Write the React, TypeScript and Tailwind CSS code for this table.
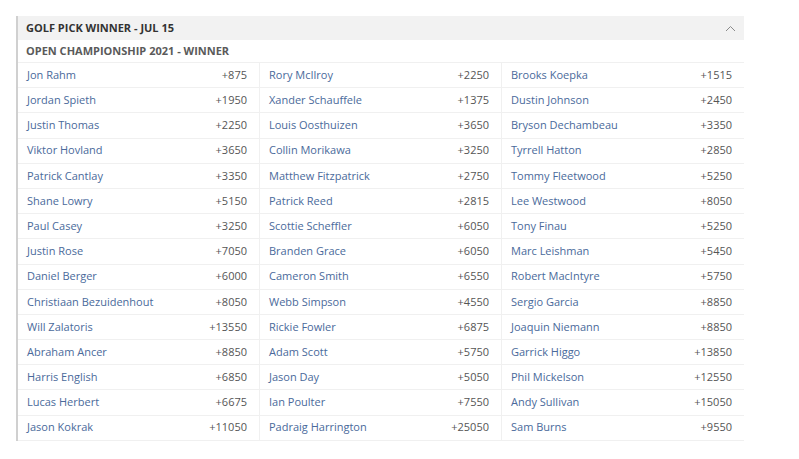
import React from "react";

const rows: [string, string, string, string, string, string][] = [
  ["Jon Rahm", "+875", "Rory McIlroy", "+2250", "Brooks Koepka", "+1515"],
  ["Jordan Spieth", "+1950", "Xander Schauffele", "+1375", "Dustin Johnson", "+2450"],
  ["Justin Thomas", "+2250", "Louis Oosthuizen", "+3650", "Bryson Dechambeau", "+3350"],
  ["Viktor Hovland", "+3650", "Collin Morikawa", "+3250", "Tyrrell Hatton", "+2850"],
  ["Patrick Cantlay", "+3350", "Matthew Fitzpatrick", "+2750", "Tommy Fleetwood", "+5250"],
  ["Shane Lowry", "+5150", "Patrick Reed", "+2815", "Lee Westwood", "+8050"],
  ["Paul Casey", "+3250", "Scottie Scheffler", "+6050", "Tony Finau", "+5250"],
  ["Justin Rose", "+7050", "Branden Grace", "+6050", "Marc Leishman", "+5450"],
  ["Daniel Berger", "+6000", "Cameron Smith", "+6550", "Robert MacIntyre", "+5750"],
  ["Christiaan Bezuidenhout", "+8050", "Webb Simpson", "+4550", "Sergio Garcia", "+8850"],
  ["Will Zalatoris", "+13550", "Rickie Fowler", "+6875", "Joaquin Niemann", "+8850"],
  ["Abraham Ancer", "+8850", "Adam Scott", "+5750", "Garrick Higgo", "+13850"],
  ["Harris English", "+6850", "Jason Day", "+5050", "Phil Mickelson", "+12550"],
  ["Lucas Herbert", "+6675", "Ian Poulter", "+7550", "Andy Sullivan", "+15050"],
  ["Jason Kokrak", "+11050", "Padraig Harrington", "+25050", "Sam Burns", "+9550"],
];

function Cell({ name, odds, last }: { name: string; odds: string; last?: boolean }) {
  return (
    <div
      className={`flex items-center justify-between h-[25.2px] pl-[9px] pr-[12px] border-b border-[#f0f0f0] ${
        last ? "" : "border-r"
      }`}
    >
      <span className="text-[#4a6a9b]">{name}</span>
      <span className="text-[#555555]">{odds}</span>
    </div>
  );
}

export default function App() {
  return (
    <div
      className="w-[799px] h-[459px] bg-white pt-[16px] pl-[16px]"
      style={{ fontFamily: '"Open Sans", "Noto Sans", sans-serif' }}
    >
      <div className="w-[728px] border-l-2 border-[#d0d0d0] text-[11px]">
        <div className="h-[24px] bg-[#f2f2f2] flex items-center justify-between pl-[8px] pr-[8px]">
          <span className="font-bold text-[#333333] text-[11px]">GOLF PICK WINNER - JUL 15</span>
          <svg width="11" height="7" viewBox="0 0 11 7">
            <path d="M1 6 L5.5 1.5 L10 6" fill="none" stroke="#8a8a8a" strokeWidth="1" />
          </svg>
        </div>
        <div className="h-[23px] flex items-center pl-[8px] border-b border-[#f0f0f0]">
          <span className="font-bold text-[#5a5a5a] text-[11px]">OPEN CHAMPIONSHIP 2021 - WINNER</span>
        </div>
        <div className="grid grid-cols-3">
          {rows.map((r, i) => (
            <React.Fragment key={i}>
              <Cell name={r[0]} odds={r[1]} />
              <Cell name={r[2]} odds={r[3]} />
              <Cell name={r[4]} odds={r[5]} last />
            </React.Fragment>
          ))}
        </div>
      </div>
    </div>
  );
}
